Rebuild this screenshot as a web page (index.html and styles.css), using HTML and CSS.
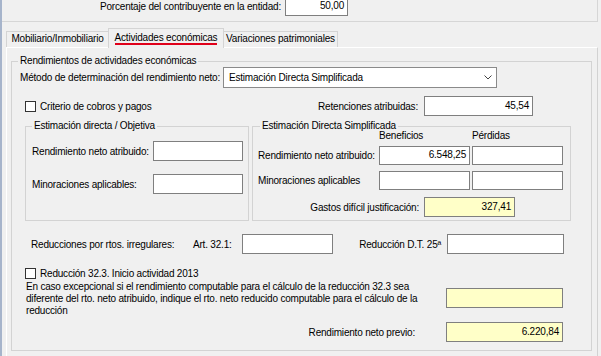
FILE: index.html
```html
<!DOCTYPE html>
<html lang="es">
<head>
<meta charset="utf-8">
<title>Actividades económicas</title>
<link rel="stylesheet" href="styles.css">
</head>
<body>
<div class="app">
  <div class="top">
    <div class="top-label">Porcentaje del contribuyente en la entidad:</div>
    <div class="field top-field">50,00</div>
  </div>

  <div class="tabs">
    <div class="tab tab1">Mobiliario/Inmobiliario</div>
    <div class="tab tab-active"><span class="tab-ul">Actividades económicas</span></div>
    <div class="tab tab3">Variaciones patrimoniales</div>
  </div>

  <div class="panel">
    <fieldset class="group main">
      <legend>Rendimientos de actividades económicas</legend>

      <div class="row r-method">
        <div class="lbl w-method">Método de determinación del rendimiento neto:</div>
        <div class="select">
          <span>Estimación Directa Simplificada</span>
          <svg class="chev" width="8" height="5" viewBox="0 0 8 5"><polyline points="0.5,0.5 4,4 7.5,0.5" fill="none" stroke="#444" stroke-width="1"/></svg>
        </div>
      </div>

      <div class="row r-ret">
        <div class="cbwrap w-cb1"><span class="cb"></span><span>Criterio de cobros y pagos</span></div>
        <div class="lbl right w-ret">Retenciones atribuidas:</div>
        <div class="field w-ret-f">45,54</div>
      </div>

      <div class="r-groups">
        <fieldset class="group sub sub-left">
          <legend>Estimación directa / Objetiva</legend>
          <div class="row lrow lrow1">
            <div class="lbl w-l">Rendimiento neto atribuido:</div>
            <div class="field w-lf"></div>
          </div>
          <div class="row lrow lrow2">
            <div class="lbl w-l">Minoraciones aplicables:</div>
            <div class="field w-lf"></div>
          </div>
        </fieldset>

        <fieldset class="group sub sub-right">
          <legend>Estimación Directa Simplificada</legend>
          <div class="hdr">
            <div class="hcol">Beneficios</div>
            <div class="hcol">Pérdidas</div>
          </div>
          <div class="row rrow rrow1">
            <div class="lbl w-r">Rendimiento neto atribuido:</div>
            <div class="field w-rf">6.548,25</div>
            <div class="field w-rf"></div>
          </div>
          <div class="row rrow rrow2">
            <div class="lbl w-r">Minoraciones aplicables</div>
            <div class="field w-rf"></div>
            <div class="field w-rf"></div>
          </div>
          <div class="row rrow3">
            <div class="lbl right w-gastos">Gastos difícil justificación:</div>
            <div class="field yellow w-rf">327,41</div>
          </div>
        </fieldset>
      </div>

      <div class="row r-red">
        <div class="lbl w-red1">Reducciones por rtos. irregulares:</div>
        <div class="lbl w-red2">Art. 32.1:</div>
        <div class="field w-art"></div>
        <div class="lbl right w-red3">Reducción D.T. 25ª</div>
        <div class="field w-wide"></div>
      </div>

      <div class="row r-cb2">
        <div class="cbwrap"><span class="cb"></span><span>Reducción 32.3. Inicio actividad 2013</span></div>
      </div>

      <div class="r-para">
        <p class="para">En caso excepcional si el rendimiento computable para el cálculo de la reducción 32.3 sea<br>diferente del rto. neto atribuido, indique el rto. neto reducido computable para el cálculo de la<br>reducción</p>
        <div class="field yellow w-wide para-field"></div>
      </div>

      <div class="row r-prev">
        <div class="lbl right w-prev">Rendimiento neto previo:</div>
        <div class="field yellow w-wide">6.220,84</div>
      </div>
    </fieldset>
  </div>
</div>
</body>
</html>
```

FILE: styles.css
```css
* { box-sizing: border-box; }
html, body { margin: 0; padding: 0; }
body {
  width: 601px;
  height: 356px;
  overflow: hidden;
  background: #f0f0f0;
  color: #000;
  font-family: "Liberation Sans", Arial, sans-serif;
  font-size: 10px;
  letter-spacing: -0.2px;
}
.app {
  height: 356px;
  border-left: 2px solid #a6b4cb;
}

/* top strip */
.top {
  width: 596px;
  height: 22px;
  display: flex;
  align-items: flex-start;
  border-bottom: 1px solid #d6d6d6;
  border-right: 1px solid #d6d6d6;
}
.top-label {
  width: 279px;
  text-align: right;
  line-height: 12px;
  margin-top: 1px;
  white-space: nowrap;
}
.top-field {
  width: 63px;
  height: 20px;
  margin-left: 4px;
  margin-top: -4px;
}

/* tabs */
.tabs {
  display: flex;
  align-items: flex-end;
  height: 19px;
  margin-top: 6px;
  padding-left: 4px;
}
.tab {
  height: 16px;
  line-height: 14px;
  border: 1px solid #d4d4d4;
  border-bottom: none;
  text-align: center;
  white-space: nowrap;
  background: #f0f0f0;
}
.tab1 { width: 102px; border-right: none; }
.tab3 { width: 114px; border-left: none; }
.tab-active {
  position: relative;
  z-index: 2;
  width: 116px;
  height: 20px;
  margin-bottom: -1px;
  padding-top: 3px;
  line-height: 11px;
  background: #f0f0f0;
}
.tab-ul {
  display: inline-block;
  line-height: 11px;
  border-bottom: 2px solid #e0001a;
}

/* panel */
.panel {
  margin: 0 3px 0 4px;
  height: 320px;
  border: 1px solid;
  border-color: #ffffff #d2d2d2 #d2d2d2 #ffffff;
  padding: 7px 5px 0 4px;
}

/* group boxes */
.group {
  margin: 0;
  padding: 0;
  min-width: 0;
  border: 1px solid #d3d3d3;
}
.group legend {
  margin-left: 6px;
  padding: 0 2px;
  line-height: 12px;
  white-space: nowrap;
}
.main { padding-bottom: 8px; }

.row {
  display: flex;
  align-items: center;
  white-space: nowrap;
}
.lbl { white-space: nowrap; flex: none; }
.right { text-align: right; }

.field {
  flex: none;
  height: 20px;
  background: #fff;
  border: 1px solid #7f7f7f;
  text-align: right;
  padding-right: 3px;
  line-height: 17px;
}
.yellow { background: #ffffc8; }

.cbwrap {
  display: flex;
  align-items: center;
  gap: 4px;
  flex: none;
}
.cb {
  width: 11px;
  height: 11px;
  background: #fff;
  border: 1px solid #333;
  flex: none;
}

/* method row */
.r-method { height: 21px; padding-left: 8px; }
.w-method { width: 203px; }
.select {
  width: 274px;
  height: 21px;
  background: #fff;
  border: 1px solid #8a8a8a;
  display: flex;
  align-items: center;
  justify-content: space-between;
  padding: 0 4px 0 5px;
}
.chev { flex: none; }

/* retenciones row */
.r-ret { margin-top: 8px; height: 20px; padding-left: 13px; }
.w-cb1 { width: 275px; }
.w-ret { width: 118px; }
.w-ret-f { width: 109px; margin-left: 6px; }

/* sub groups */
.r-groups {
  display: flex;
  gap: 3px;
  margin-top: 4px;
  padding-left: 13px;
}
.sub { height: 101px; }
.sub-left { width: 224px; }
.sub-right { width: 319px; }
.sub-right legend { margin-left: 7px; }

.lrow { height: 20px; padding-left: 6px; }
.lrow1 { margin-top: 9px; }
.lrow2 { margin-top: 13px; }
.w-l { width: 121px; }
.w-lf { width: 90px; }

.hdr {
  display: flex;
  height: 12px;
  line-height: 12px;
  margin-top: -2px;
  padding-left: 126px;
}
.hcol { width: 93px; }
.rrow { height: 19px; padding-left: 5px; gap: 2px; }
.rrow .w-r { width: 119px; }
.rrow .field { height: 19px; line-height: 16px; }
.rrow1 { margin-top: 4px; }
.rrow2 { margin-top: 6px; }
.w-rf { width: 91px; }
.rrow3 { margin-top: 7px; height: 20px; padding-left: 5px; }
.w-gastos { width: 161px; margin-right: 5px; }

/* reducciones row */
.r-red { margin-top: 13px; height: 20px; padding-left: 19px; }
.w-red1 { width: 162px; }
.w-red2 { width: 49px; }
.w-art { width: 91px; }
.w-red3 { width: 114px; padding-right: 6px; }
.w-wide { width: 117px; }

.r-cb2 { margin-top: 13px; height: 12px; padding-left: 13px; }

.r-para {
  display: flex;
  align-items: flex-start;
  margin-top: 2px;
  padding-left: 14px;
}
.para {
  margin: 0;
  width: 420px;
  line-height: 12px;
  white-space: nowrap;
}
.para-field { margin-top: 7px; }

.r-prev { margin-top: 5px; height: 20px; padding-left: 14px; }
.w-prev { width: 420px; padding-right: 31px; }
```
